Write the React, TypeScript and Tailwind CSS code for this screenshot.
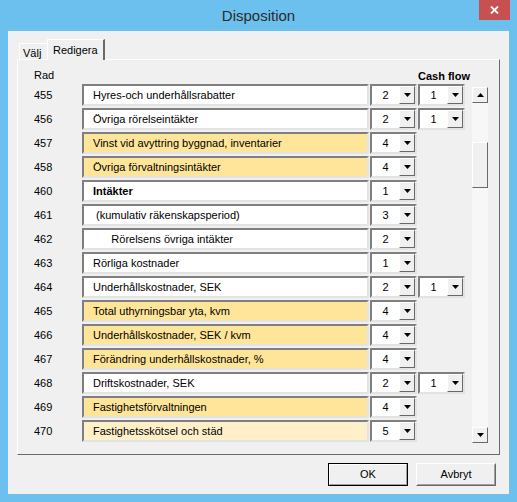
import React from "react";

type Row = { n: number; label: string; v: number; cf?: number; bg: string; bold?: boolean };

const rows: Row[] = [
  { n: 455, label: "Hyres-och underhållsrabatter", v: 2, cf: 1, bg: "bg-white" },
  { n: 456, label: "Övriga rörelseintäkter", v: 2, cf: 1, bg: "bg-white" },
  { n: 457, label: "Vinst vid avyttring byggnad, inventarier", v: 4, bg: "bg-[#ffe599]" },
  { n: 458, label: "Övriga förvaltningsintäkter", v: 4, bg: "bg-[#ffe599]" },
  { n: 460, label: "Intäkter", v: 1, bg: "bg-white", bold: true },
  { n: 461, label: " (kumulativ räkenskapsperiod)", v: 3, bg: "bg-white" },
  { n: 462, label: "      Rörelsens övriga intäkter", v: 2, bg: "bg-white" },
  { n: 463, label: "Rörliga kostnader", v: 1, bg: "bg-white" },
  { n: 464, label: "Underhållskostnader, SEK", v: 2, cf: 1, bg: "bg-white" },
  { n: 465, label: "Total uthyrningsbar yta, kvm", v: 4, bg: "bg-[#ffe599]" },
  { n: 466, label: "Underhållskostnader, SEK / kvm", v: 4, bg: "bg-[#ffe599]" },
  { n: 467, label: "Förändring underhållskostnader, %", v: 4, bg: "bg-[#ffe599]" },
  { n: 468, label: "Driftskostnader, SEK", v: 2, cf: 1, bg: "bg-white" },
  { n: 469, label: "Fastighetsförvaltningen", v: 4, bg: "bg-[#ffe599]" },
  { n: 470, label: "Fastighetsskötsel och städ", v: 5, bg: "bg-[#fff0c9]" },
];

const font = { fontFamily: '"Liberation Sans", Arial, sans-serif' };

function Down() {
  return (
    <svg width="7" height="4" viewBox="0 0 7 4">
      <path d="M0 0H7L3.5 4Z" fill="#000" />
    </svg>
  );
}
function Up() {
  return (
    <svg width="7" height="4" viewBox="0 0 7 4">
      <path d="M0 4H7L3.5 0Z" fill="#000" />
    </svg>
  );
}

function Combo({ v }: { v: number }) {
  return (
    <div className="w-[47px] h-[22px] flex border-2 border-t-[#7f7f7f] border-l-[#7f7f7f] border-r-[#e3e3e3] border-b-[#e3e3e3] bg-white">
      <div className="flex-1 flex items-center justify-center text-[11px] text-black">{v}</div>
      <div className="w-[16px] h-full bg-[#f0f0f0] border border-t-white border-l-white border-r-[#696969] border-b-[#696969] flex items-center justify-center">
        <Down />
      </div>
    </div>
  );
}

export default function App() {
  return (
    <div className="w-[517px] h-[502px] bg-[#6cc0ee] flex flex-col" style={font}>
      <div className="h-[31px] relative flex items-center justify-center">
        <span className="text-[15px] text-[#2b2b2b] mt-[1px]">Disposition</span>
        <div className="absolute right-[7px] top-0 w-[31px] h-[20px] bg-[#c75050] flex items-center justify-center">
          <svg width="9" height="8" viewBox="0 0 9 8">
            <path d="M1 0.5L8 7.5M8 0.5L1 7.5" stroke="#fff" strokeWidth="1.8" />
          </svg>
        </div>
      </div>
      <div className="mx-[8px] mb-[8px] flex-1 bg-[#f0f0f0] flex flex-col pt-[8px] px-[9px]">
        <div className="h-[20px] flex items-end pl-[2px] relative z-10">
          <div className="w-[28px] h-[16px] border-t border-l border-t-white border-l-white bg-[#f0f0f0] text-[11px] pl-[3px] pt-[1px] text-black">
            Välj
          </div>
          <div className="w-[58px] h-[21px] -mb-[1px] border-t border-l border-r-2 border-t-white border-l-white border-r-[#696969] bg-[#f0f0f0] text-[11px] pl-[5px] pt-[2px] text-black">
            Redigera
          </div>
        </div>
        <div className="h-[396px] w-[483px] border border-t-white border-l-white border-r-[#696969] border-b-[#696969] flex pl-[16px] pt-[7px]">
          <div className="flex flex-col">
            <div className="h-[16px] mb-[1px] flex items-center text-[11px] text-black">
              <div className="w-[48px]">Rad</div>
              <div className="w-[336px]" />
              <div className="w-[47px] font-bold whitespace-nowrap pt-[2px]">Cash flow</div>
            </div>
            <div className="flex flex-col gap-[2px]">
              {rows.map((r) => (
                <div key={r.n} className="flex items-center h-[22px] gap-[1px]">
                  <div className="w-[47px] text-[11px] text-black">{r.n}</div>
                  <div
                    className={`w-[287px] h-[22px] border-2 border-t-[#7f7f7f] border-l-[#7f7f7f] border-r-[#e3e3e3] border-b-[#e3e3e3] flex items-center pl-[9px] text-[11px] text-black whitespace-pre ${r.bg} ${r.bold ? "font-bold" : ""}`}
                  >
                    {r.label}
                  </div>
                  <Combo v={r.v} />
                  {r.cf !== undefined ? <Combo v={r.cf} /> : <div className="w-[47px]" />}
                </div>
              ))}
            </div>
          </div>
          <div className="ml-[7px] mt-[20px] w-[16px] h-[356px] flex flex-col bg-[#f7f7f7]">
            <div className="h-[16px] bg-[#f0f0f0] border border-t-white border-l-white border-r-[#696969] border-b-[#696969] flex items-center justify-center">
              <Up />
            </div>
            <div className="h-[39px]" />
            <div className="h-[46px] bg-[#f0f0f0] border border-t-white border-l-white border-r-[#696969] border-b-[#696969]" />
            <div className="flex-1" />
            <div className="h-[16px] bg-[#f0f0f0] border border-t-white border-l-white border-r-[#696969] border-b-[#696969] flex items-center justify-center">
              <Down />
            </div>
          </div>
        </div>
        <div className="mt-[8px] flex justify-end gap-[8px] pr-[4px]">
          <div className="w-[80px] h-[23px] border border-black">
            <div className="w-full h-full border border-t-white border-l-white border-r-[#a0a0a0] border-b-[#a0a0a0] bg-[#f0f0f0] flex items-center justify-center text-[11px] text-black">
              OK
            </div>
          </div>
          <div className="w-[80px] h-[23px] border border-t-white border-l-white border-r-[#696969] border-b-[#696969]">
            <div className="w-full h-full border border-t-[#f0f0f0] border-l-[#f0f0f0] border-r-[#a0a0a0] border-b-[#a0a0a0] bg-[#f0f0f0] flex items-center justify-center text-[11px] text-black">
              Avbryt
            </div>
          </div>
        </div>
      </div>
    </div>
  );
}
